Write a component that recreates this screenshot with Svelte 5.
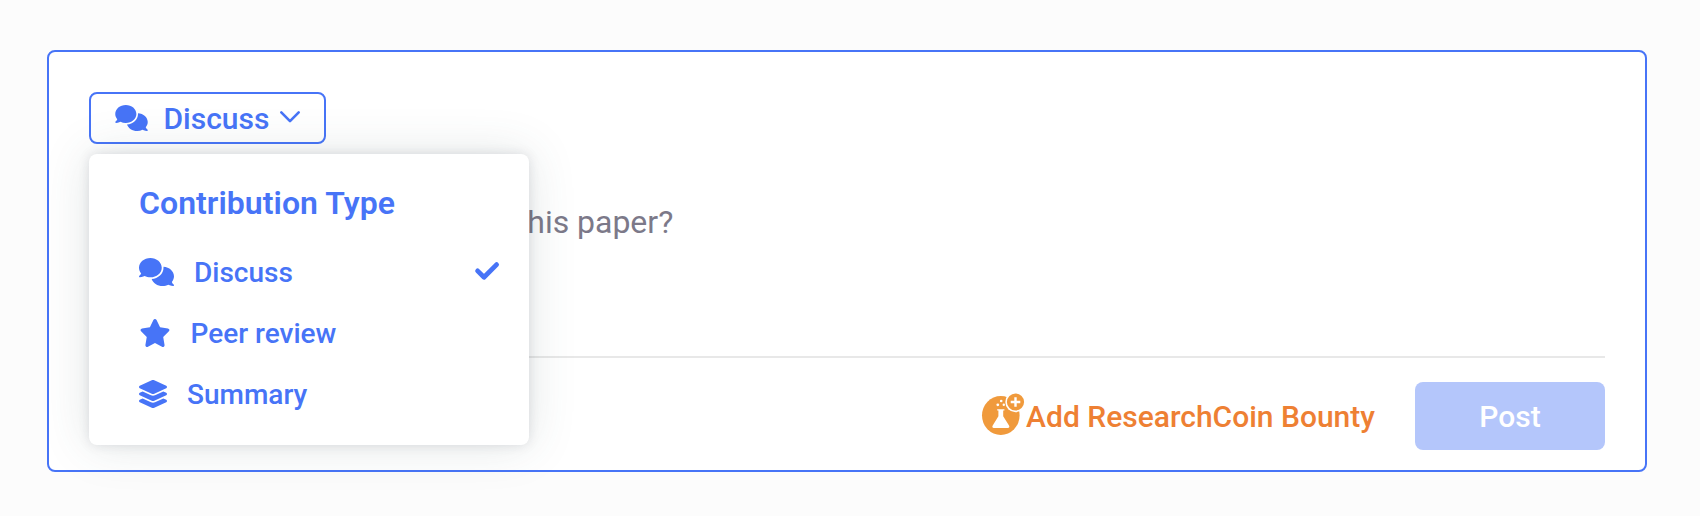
<script lang="ts">
  interface ContributionType {
    id: string;
    label: string;
    icon: string;
    viewBox: string;
    width: number;
  }

  const types: ContributionType[] = [
    {
      id: 'discuss',
      label: 'Discuss',
      icon: 'M208 352c114.9 0 208-78.8 208-176S322.9 0 208 0S0 78.8 0 176c0 38.6 14.7 74.3 39.6 103.4c-3.5 9.4-8.7 17.7-14.2 24.7c-4.8 6.2-9.7 11-13.3 14.3c-1.8 1.6-3.3 2.9-4.3 3.7c-.5 .4-.9 .7-1.1 .8l-.2 .2C1 327.2-1.4 334.4 .8 340.9S9.1 352 16 352c21.8 0 43.8-5.6 62.1-12.5c9.2-3.5 17.8-7.4 25.3-11.4C134.1 343.3 169.8 352 208 352zM448 176c0 112.3-99.1 196.9-216.5 207C255.8 457.4 336.4 512 432 512c38.2 0 73.9-8.7 104.7-23.9c7.5 4 16 7.9 25.2 11.4c18.3 6.9 40.3 12.5 62.1 12.5c6.9 0 13.1-4.5 15.2-11.1c2.1-6.6-.2-13.8-5.8-17.9l-.2-.2c-.2-.2-.6-.4-1.1-.8c-1-.8-2.5-2-4.3-3.7c-3.6-3.3-8.5-8.1-13.3-14.3c-5.5-7-10.7-15.4-14.2-24.7c24.9-29 39.6-64.7 39.6-103.4c0-92.8-84.9-168.9-192.6-175.5c.4 5.1 .6 10.3 .6 15.5z',
      viewBox: '0 0 640 512',
      width: 35
    },
    {
      id: 'review',
      label: 'Peer review',
      icon: 'M316.9 18C311.6 7 300.4 0 288.1 0s-23.4 7-28.8 18L195 150.3 51.4 171.5c-12 1.8-22 10.2-25.7 21.7s-.7 24.2 7.9 32.7L137.8 329 113.2 474.7c-2 12 3 24.2 12.9 31.3s23 8 33.8 2.3l128.3-68.5 128.3 68.5c10.8 5.7 23.9 4.9 33.8-2.3s14.9-19.3 12.9-31.3L438.5 329 542.7 225.9c8.6-8.5 11.7-21.2 7.9-32.7s-13.7-19.9-25.7-21.7L381.2 150.3 316.9 18z',
      viewBox: '-4 0 576 512',
      width: 31.5
    },
    {
      id: 'summary',
      label: 'Summary',
      icon: 'M264.5 5.2c14.9-6.9 32.1-6.9 47 0l218.6 101c8.5 3.9 13.9 12.4 13.9 21.8s-5.4 17.9-13.9 21.8l-218.6 101c-14.9 6.9-32.1 6.9-47 0L45.9 149.8C37.4 145.8 32 137.3 32 128s5.4-17.9 13.9-21.8L264.5 5.2zM476.9 209.6l53.2 24.6c8.5 3.9 13.9 12.4 13.9 21.8s-5.4 17.9-13.9 21.8l-218.6 101c-14.9 6.9-32.1 6.9-47 0L45.9 277.8C37.4 273.8 32 265.3 32 256s5.4-17.9 13.9-21.8l53.2-24.6 152 70.2c23.4 10.8 50.4 10.8 73.8 0l152-70.2zm-152 198.2l152-70.2 53.2 24.6c8.5 3.9 13.9 12.4 13.9 21.8s-5.4 17.9-13.9 21.8l-218.6 101c-14.9 6.9-32.1 6.9-47 0L45.9 405.8C37.4 401.8 32 393.3 32 384s5.4-17.9 13.9-21.8l53.2-24.6 152 70.2c23.4 10.8 50.4 10.8 73.8 0z',
      viewBox: '32 0 512 512',
      width: 28
    }
  ];

  let selected = $state('discuss');
  let open = $state(true);

  const current = $derived(types.find((t) => t.id === selected) ?? types[0]);

  function choose(id: string) {
    selected = id;
    open = false;
  }
</script>

<main>
  <section class="composer">
    <div class="picker">
      <button
        class="trigger"
        type="button"
        aria-expanded={open}
        onclick={() => (open = !open)}
      >
        <svg class="trigger-icon" viewBox={current.viewBox}>
          <path d={current.icon} />
        </svg>
        <span>{current.label}</span>
        <svg class="chevron" viewBox="0 0 20 12">
          <path d="M1.3 1.4 10 10.2l8.7-8.8" />
        </svg>
      </button>

      {#if open}
        <div class="menu" role="menu">
          <h2>Contribution Type</h2>
          {#each types as type (type.id)}
            <button
              class="item"
              type="button"
              role="menuitem"
              onclick={() => choose(type.id)}
            >
              <svg viewBox={type.viewBox} width={type.width} height="28">
                <path d={type.icon} />
              </svg>
              <span>{type.label}</span>
              {#if type.id === selected}
                <svg class="check" viewBox="0 0 24 18">
                  <path d="M2.6 8.9 9 15.2 21.6 2.6" />
                </svg>
              {/if}
            </button>
          {/each}
        </div>
      {/if}
    </div>

    <p class="placeholder">What are your thoughts about this paper?</p>

    <footer>
      <button class="bounty" type="button">
        <svg class="coin" viewBox="0 0 42 42">
          <ellipse cx="18.8" cy="22.5" rx="18.8" ry="19.5" />
          <g class="flask">
            <path
              d="M15.2 16.2h7.2v1.4h-1.2v5.6l5.8 9.4c.8 1.4.2 2.4-1.2 2.4H11.9c-1.4 0-2-1-1.2-2.4l5.7-9.4v-5.6h-1.2z"
            />
            <circle cx="15.8" cy="11.8" r="1.4" />
            <circle cx="19.2" cy="8" r="1.3" />
            <circle cx="21.8" cy="11.8" r="1.2" />
          </g>
          <circle class="ring" cx="33.5" cy="9" r="10.2" />
          <circle cx="33.5" cy="9" r="8.6" />
          <path class="plus" d="M33.5 4.2v9.6M28.7 9h9.6" />
        </svg>
        <span>Add ResearchCoin Bounty</span>
      </button>
      <button class="post" type="button">Post</button>
    </footer>
  </section>
</main>

<style>
  :global(body) {
    margin: 0;
    background: #fcfcfc;
  }

  main {
    box-sizing: border-box;
    height: 516px;
    padding: 50px 53px 44px 47px;
    font-family: Roboto, 'Liberation Sans', sans-serif;
  }

  button {
    margin: 0;
    padding: 0;
    border: 0;
    background: none;
    font-family: inherit;
    font-weight: 500;
    cursor: pointer;
  }

  svg {
    flex: none;
    fill: currentColor;
    overflow: visible;
  }

  .composer {
    box-sizing: border-box;
    display: flex;
    flex-direction: column;
    height: 422px;
    padding: 40px 40px 20px;
    border: 2px solid #4774f7;
    border-radius: 8px;
    background: #fff;
  }

  .picker {
    position: relative;
    align-self: flex-start;
    color: #4774f7;
  }

  .trigger {
    box-sizing: border-box;
    display: flex;
    align-items: center;
    width: 237px;
    height: 52px;
    padding-left: 24px;
    border: 2px solid #4774f7;
    border-radius: 8px;
    color: inherit;
    font-size: 30px;
    line-height: 36px;
  }

  .trigger span,
  .item span,
  .bounty span {
    padding-top: 2px;
  }

  .trigger-icon {
    width: 33px;
    height: 26px;
    margin-right: 15.5px;
  }

  .chevron {
    width: 20px;
    height: 12px;
    margin: 0 0 2px 11px;
    fill: none;
    stroke: currentColor;
    stroke-width: 2.6;
    stroke-linecap: round;
    stroke-linejoin: round;
  }

  .menu {
    position: absolute;
    top: 62px;
    left: 0;
    z-index: 2;
    box-sizing: border-box;
    width: 440px;
    height: 291px;
    padding: 30px 30px 20px 50px;
    border-radius: 8px;
    background: #fff;
    box-shadow:
      0 0 12px rgba(36, 31, 58, 0.12),
      0 0 48px rgba(60, 90, 90, 0.15);
  }

  h2 {
    margin: 0 0 19px;
    font-size: 32px;
    font-weight: 600;
    letter-spacing: 0.05px;
    line-height: 38px;
    white-space: nowrap;
  }

  .item {
    display: flex;
    align-items: center;
    gap: 20px;
    width: 100%;
    height: 61px;
    color: inherit;
    font-size: 28px;
    line-height: 34px;
  }

  .check {
    width: 24px;
    height: 18px;
    margin: 0 0 2px auto;
    fill: none;
    stroke: currentColor;
    stroke-width: 4.8;
    stroke-linecap: round;
    stroke-linejoin: round;
  }

  .placeholder {
    margin: 59px 0 0;
    color: #7c7989;
    font-size: 32px;
    letter-spacing: -0.02px;
    line-height: 38px;
  }

  footer {
    display: flex;
    justify-content: flex-end;
    align-items: center;
    gap: 40px;
    margin-top: auto;
    padding-top: 24px;
    border-top: 2px solid #e8e8e8;
  }

  .bounty {
    display: flex;
    align-items: center;
    color: #ee8033;
    font-size: 30px;
    line-height: 36px;
  }

  .coin {
    width: 42px;
    height: 42px;
    margin: 0 2px 4px 0;
    color: #f09a3c;
  }

  .flask,
  .ring {
    fill: #fff;
  }

  .plus {
    fill: none;
    stroke: #fff;
    stroke-width: 2.4;
  }

  .post {
    width: 190px;
    height: 68px;
    padding-top: 2px;
    border-radius: 8px;
    background: #b4c6fb;
    color: #fff;
    font-size: 30px;
    line-height: 36px;
  }
</style>
